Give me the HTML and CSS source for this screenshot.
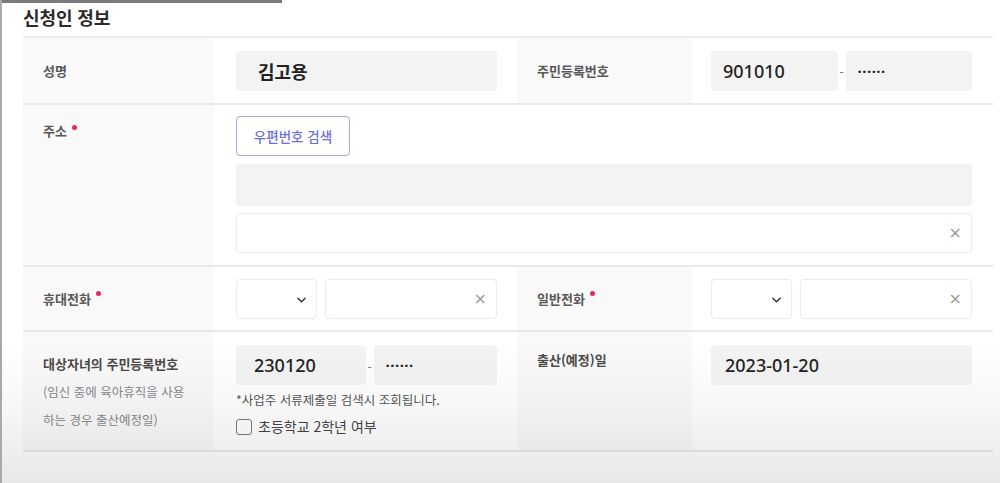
FILE: index.html
```html
<!DOCTYPE html>
<html lang="ko">
<head>
<meta charset="utf-8">
<link rel="stylesheet" href="styles.css">
</head>
<body>
<div class="topbar"></div>
<div class="page">
  <h2 class="title">신청인 정보</h2>
  <div class="table">
    <div class="row r1">
      <div class="label">성명</div>
      <div class="cell"><div class="field filled name">김고용</div></div>
      <div class="label">주민등록번호</div>
      <div class="cell pair">
        <div class="field filled num">901010</div>
        <span class="dash">-</span>
        <div class="field filled num dots">······</div>
      </div>
    </div>
    <div class="row r2">
      <div class="label top">주소<span class="req"></span></div>
      <div class="cell wide stack">
        <button class="btn">우편번호 검색</button>
        <div class="field filled tall"></div>
        <div class="field white clear"><span class="x">×</span></div>
      </div>
    </div>
    <div class="row r3">
      <div class="label">휴대전화<span class="req"></span></div>
      <div class="cell phone">
        <div class="field white select"><svg class="chev" viewBox="0 0 10 6" width="9" height="6"><path d="M1 1l4 4 4-4" fill="none" stroke="#333" stroke-width="1.6" stroke-linecap="round" stroke-linejoin="round"/></svg></div>
        <div class="field white clear grow"><span class="x">×</span></div>
      </div>
      <div class="label">일반전화<span class="req"></span></div>
      <div class="cell phone">
        <div class="field white select"><svg class="chev" viewBox="0 0 10 6" width="9" height="6"><path d="M1 1l4 4 4-4" fill="none" stroke="#333" stroke-width="1.6" stroke-linecap="round" stroke-linejoin="round"/></svg></div>
        <div class="field white clear grow"><span class="x">×</span></div>
      </div>
    </div>
    <div class="row r4">
      <div class="label multi child-label">
        <div class="strong">대상자녀의 주민등록번호</div>
        <div class="sub">(임신 중에 육아휴직을 사용</div>
        <div class="sub">하는 경우 출산예정일)</div>
      </div>
      <div class="cell col">
        <div class="pair">
          <div class="field filled num child">230120</div>
          <span class="dash">-</span>
          <div class="field filled num dots">······</div>
        </div>
        <div class="note">*사업주 서류제출일 검색시 조회됩니다.</div>
        <label class="check"><span class="box"></span>초등학교 2학년 여부</label>
      </div>
      <div class="label multi"><div class="strong">출산(예정)일</div></div>
      <div class="cell col">
        <div class="field filled num date">2023-01-20</div>
      </div>
    </div>
  </div>
</div>
<div class="vignette"></div>
</body>
</html>
```
FILE: styles.css
```css
* { box-sizing: border-box; }
html, body { margin: 0; padding: 0; }
body {
  width: 1000px;
  height: 483px;
  overflow: hidden;
  background: #fff;
  font-family: "Noto Sans CJK KR", "Noto Sans", sans-serif;
  color: #333;
  border-left: 2px solid #a9a9a9;
  position: relative;
}
.topbar {
  position: absolute;
  left: 0; top: 0;
  width: 280px; height: 3px;
  background: #7a7a7a;
}
.page { padding-left: 21px; }
.title {
  margin: 0;
  height: 36px;
  padding-top: 4px;
  font-size: 18px;
  line-height: 26px;
  font-weight: 700;
  color: #2a2a2a;
  letter-spacing: -0.1px;
}
.table {
  width: 970px;
  border-top: 2px solid #ededed;
}
.row {
  display: grid;
  grid-template-columns: 190px 304px 175px 1fr;
  border-bottom: 2px solid #e9e9e9;
}
.r1 { height: 67px; }
.r2 { height: 162px; }
.r3 { height: 65px; }
.r4 { height: 120px; }
.label {
  background: #f9f9f9;
  padding-left: 20px;
  font-size: 13px;
  font-weight: 700;
  color: #585858;
  display: flex;
  align-items: center;
}
.label.top { align-items: flex-start; padding-top: 16px; line-height: 20px; }
.label.multi { display: block; padding-top: 14px; }
.label.child-label { padding-top: 18px; }
.label.multi div { line-height: 28px; height: 28px; }
.label .strong { color: #4a4a4a; }
.label .sub { color: #8a8a8a; font-size: 12.5px; font-weight: 400; }
.req {
  display: inline-block;
  width: 5px; height: 5px;
  border-radius: 50%;
  background: #e8285a;
  margin-left: 5px;
  align-self: flex-start;
  margin-top: 24px;
}
.label.top .req { margin-top: 4px; vertical-align: top; }
.cell {
  padding: 0 20px 0 23px;
  display: flex;
  align-items: center;
}
.r1 .cell:last-child, .r3 .cell:last-child, .r4 .cell:last-child { padding-left: 19px; padding-right: 21px; }
.cell.wide { grid-column: 2 / 5; padding-right: 21px; }
.stack {
  flex-direction: column;
  align-items: stretch;
  justify-content: flex-start;
  padding-top: 11px;
}
.field {
  height: 40px;
  border-radius: 4px;
  display: flex;
  align-items: center;
  font-size: 18px;
  color: #222;
}
.filled { background: #f3f3f3; flex: 1; }
.white {
  background: #fff;
  border: 1px solid #ececec;
  box-shadow: 0 0 1px rgba(0,0,0,0.04);
}
.name { font-weight: 700; padding-left: 22px; font-size: 18px; }
.num { padding-left: 12px; font-weight: 500; font-family: "Noto Sans", sans-serif; }
.dots { font-size: 15px; letter-spacing: 0.5px; font-weight: 700; }
.child { padding-left: 18px; }
.date { flex: none; width: 100%; padding-left: 14px; }
.pair { display: flex; align-items: center; width: 100%; }
.dash {
  width: 8px;
  text-align: center;
  font-size: 13px;
  color: #777;
  margin-top: 2px;
}
.btn {
  align-self: flex-start;
  width: 114px;
  height: 40px;
  border: 1.5px solid #a6a8ea;
  border-radius: 4px;
  background: #fff;
  color: #6d70d6;
  font-family: "Noto Sans CJK KR", sans-serif;
  font-size: 13.5px;
  font-weight: 500;
  padding: 0;
}
.tall { height: 42px; margin-top: 8px; flex: none; }
.clear { justify-content: flex-end; padding-right: 9px; }
.stack .clear { margin-top: 7px; }
.x { color: #9a9a9a; font-size: 16px; font-family: "DejaVu Sans", sans-serif; line-height: 1; }
.phone { gap: 8px; padding-top: 1px; }
.select { width: 81px; flex: none; justify-content: flex-end; padding-right: 10px; }
.chev { display: block; margin-top: 2px; }
.grow { flex: 1; }
.col {
  flex-direction: column;
  align-items: stretch;
  justify-content: flex-start;
  padding-top: 13px;
}
.note {
  font-size: 12.5px;
  color: #555;
  margin-top: 7px;
  line-height: 16px;
}
.check {
  display: flex;
  align-items: center;
  font-size: 14px;
  color: #444;
  margin-top: 10px;
  line-height: 17px;
}
.box {
  width: 16px; height: 16px;
  border: 1.5px solid #777;
  border-radius: 3px;
  margin-right: 6px;
  background: #fff;
}
.vignette {
  position: absolute;
  left: 0; right: 0; bottom: 0;
  height: 140px;
  background: linear-gradient(to bottom, rgba(0,0,0,0) 0%, rgba(0,0,0,0.03) 45%, rgba(0,0,0,0.09) 100%);
  pointer-events: none;
}
```
